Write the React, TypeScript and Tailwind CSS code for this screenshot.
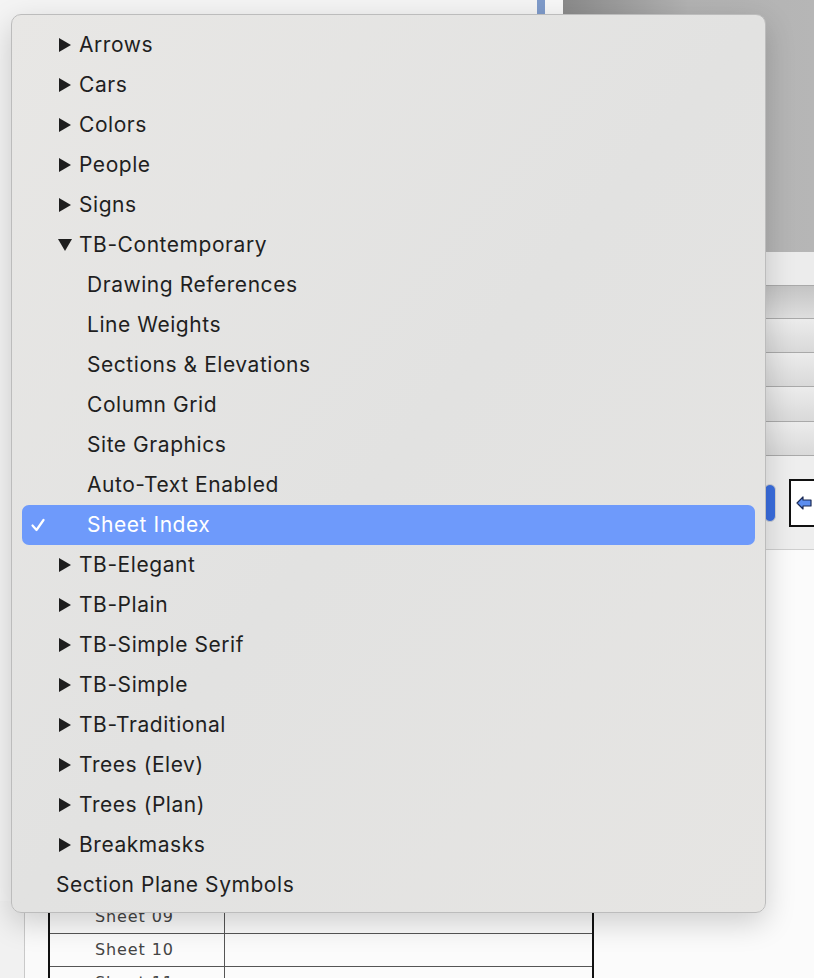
import React from "react";

type Item = { label: string; kind: "closed" | "open" | "sub" | "checked" | "plain" };

const items: Item[] = [
  { label: "Arrows", kind: "closed" },
  { label: "Cars", kind: "closed" },
  { label: "Colors", kind: "closed" },
  { label: "People", kind: "closed" },
  { label: "Signs", kind: "closed" },
  { label: "TB-Contemporary", kind: "open" },
  { label: "Drawing References", kind: "sub" },
  { label: "Line Weights", kind: "sub" },
  { label: "Sections & Elevations", kind: "sub" },
  { label: "Column Grid", kind: "sub" },
  { label: "Site Graphics", kind: "sub" },
  { label: "Auto-Text Enabled", kind: "sub" },
  { label: "Sheet Index", kind: "checked" },
  { label: "TB-Elegant", kind: "closed" },
  { label: "TB-Plain", kind: "closed" },
  { label: "TB-Simple Serif", kind: "closed" },
  { label: "TB-Simple", kind: "closed" },
  { label: "TB-Traditional", kind: "closed" },
  { label: "Trees (Elev)", kind: "closed" },
  { label: "Trees (Plan)", kind: "closed" },
  { label: "Breakmasks", kind: "closed" },
  { label: "Section Plane Symbols", kind: "plain" },
];

function Tri({ down }: { down?: boolean }) {
  return (
    <svg width="14" height="14" viewBox="0 0 14 14" className="shrink-0">
      {down ? <polygon points="0,1 14,1 7,13" fill="#1e1e1e" /> : <polygon points="1,0 13,7 1,14" fill="#1e1e1e" />}
    </svg>
  );
}

function MenuRow({ item }: { item: Item }) {
  if (item.kind === "checked") {
    return (
      <div className="h-10 mx-[10px] rounded-[7px] bg-[#6e9afb] flex items-center text-white">
        <svg width="14" height="14" viewBox="0 0 14 14" className="ml-[9px] shrink-0">
          <polyline points="1.5,7.5 5.5,12 12.5,2" fill="none" stroke="white" strokeWidth="2.2" strokeLinecap="round" strokeLinejoin="round" />
        </svg>
        <span className="ml-[42px]">{item.label}</span>
      </div>
    );
  }
  if (item.kind === "sub") {
    return (
      <div className="h-10 flex items-center pl-[75px]">
        <span>{item.label}</span>
      </div>
    );
  }
  if (item.kind === "plain") {
    return (
      <div className="h-10 flex items-center pl-[44px]">
        <span>{item.label}</span>
      </div>
    );
  }
  return (
    <div className="h-10 flex items-center pl-[46px]">
      <Tri down={item.kind === "open"} />
      <span className="ml-[7px]">{item.label}</span>
    </div>
  );
}

export default function App() {
  return (
    <div className="relative w-[814px] h-[978px] overflow-hidden bg-[#f3f3f3]">
      {/* background window */}
      <div className="flex flex-col w-full h-full">
        <div className="flex h-[901px] shrink-0">
          {/* left document area */}
          <div className="w-[563px] flex">
            <div className="w-[537px] bg-[#f4f4f4]" />
            <div className="w-[8px] bg-[#7f9bca]" />
            <div className="w-[18px] bg-[#f7f7f7]" />
          </div>
          {/* right inspector */}
          <div className="w-[251px] flex flex-col">
            <div className="h-[252px] bg-gradient-to-r from-[#8a8a8a] via-[#b2b2b2] to-[#b6b6b6]" />
            <div className="h-[34px] bg-[#ececec] border-b border-[#a9a9a9]" />
            <div className="h-[33px] bg-gradient-to-b from-[#c4c4c4] to-[#dedede] border-b border-[#a9a9a9]" />
            <div className="h-[34px] bg-gradient-to-b from-[#ececec] to-[#d9d9d9] border-b border-[#a9a9a9]" />
            <div className="h-[34px] bg-gradient-to-b from-[#ececec] to-[#d9d9d9] border-b border-[#a9a9a9]" />
            <div className="h-[35px] bg-gradient-to-b from-[#ececec] to-[#d9d9d9] border-b border-[#a9a9a9]" />
            <div className="h-[34px] bg-gradient-to-b from-[#ececec] to-[#d9d9d9] border-b border-[#a9a9a9]" />
            <div className="h-[94px] bg-[#eeeeee] border-b border-[#cfcfcf] flex items-center pl-[201px] gap-[13px]">
              <div className="w-[12px] h-[38px] rounded-[6px] bg-[#3a6ee0] border border-[#d4d4d4] shrink-0" />
              <div className="w-[30px] h-[48px] bg-white border-2 border-[#111] flex items-center pl-[5px] shrink-0">
                <svg width="16" height="14" viewBox="0 0 16 14">
                  <polygon points="1,7 7,1 7,4 15,4 15,10 7,10 7,13" fill="#5b8def" stroke="#1b2a55" strokeWidth="1.2" strokeLinejoin="round" />
                </svg>
              </div>
            </div>
            <div className="flex-1 bg-[#fbfbfb]" />
          </div>
        </div>
        {/* bottom band with table */}
        <div className="flex flex-1 min-h-0 overflow-hidden">
          <div className="w-[25px] bg-[#f1f1f1] border-r border-[#c9c9c9]" />
          <div className="w-[23px] bg-[#fafafa]" />
          <div className="w-[546px] bg-[#fbfbfb] border-x-2 border-[#111]">
            <div className="flex flex-col font-['DejaVu_Sans',sans-serif] text-[16px] tracking-[0.9px] text-[#444]">
              {["Sheet 09", "Sheet 10", "Sheet 11"].map((s) => (
                <div key={s} className="h-[33px] shrink-0 flex border-b border-[#555]">
                  <div className="w-[175px] border-r border-[#555] flex items-center pl-[45px]">{s}</div>
                  <div className="flex-1" />
                </div>
              ))}
            </div>
          </div>
          <div className="flex-1 bg-[#fbfbfb]" />
        </div>
      </div>

      {/* popup menu */}
      <div className="absolute left-[11px] top-[14px] w-[755px] h-[899px] rounded-[10px] border border-[#bcbcbc] bg-gradient-to-br from-[#e8e7e5] via-[#e2e2e1] to-[#e6e5e3] shadow-[0_10px_30px_rgba(0,0,0,0.18)] pt-[10px] pb-[8px] font-['Inter',sans-serif] text-[21px] tracking-[0.55px] text-[#1f1f1f]">
        {items.map((it) => (
          <MenuRow key={it.label} item={it} />
        ))}
      </div>
    </div>
  );
}
